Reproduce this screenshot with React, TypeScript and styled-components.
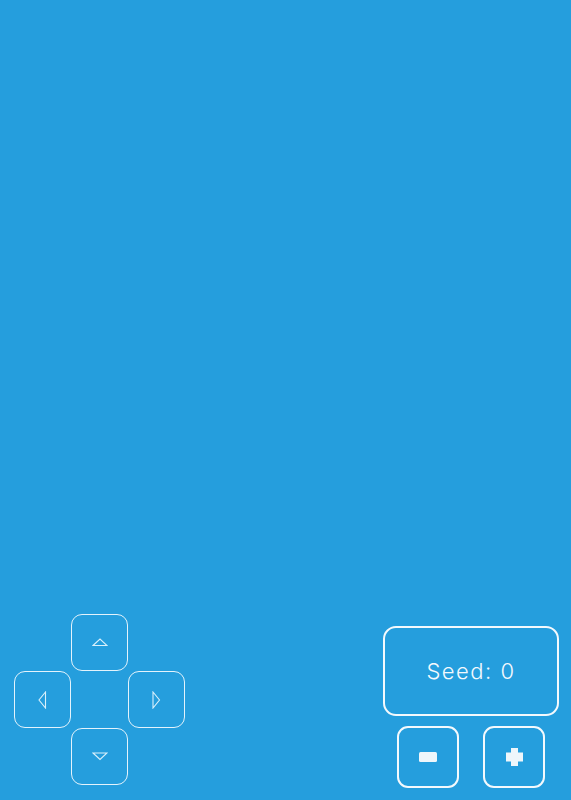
import styled, { createGlobalStyle } from "styled-components";

const GlobalStyle = createGlobalStyle`
	html, body {
		margin: 0;
		padding: 0;
		background-color: #259edd;
	}
`;

type Direction = "up" | "down" | "left" | "right";

const arrowPoints: Record<Direction, string> = {
	up: "1,7.5 8,1 15,7.5",
	down: "1,1 8,7.5 15,1",
	left: "7.5,1 1,9 7.5,17",
	right: "1,1 7.5,9 1,17",
};

function Arrow({ dir }: { dir: Direction }) {
	const vertical = dir === "up" || dir === "down";
	return (
		<svg
			width={vertical ? 16 : 9}
			height={vertical ? 9 : 18}
			viewBox={vertical ? "0 0 16 9" : "0 0 9 18"}
			fill="none"
			stroke="#d9f0fb"
			strokeWidth="1.1"
		>
			<polygon points={arrowPoints[dir]} />
		</svg>
	);
}

export default function App() {
	return (
		<>
			<GlobalStyle />
			<Screen>
				<Controls>
					<DPad>
						<PadButton $col={2} $row={1} aria-label="up">
							<Arrow dir="up" />
						</PadButton>
						<PadButton $col={1} $row={2} aria-label="left">
							<Arrow dir="left" />
						</PadButton>
						<PadButton $col={3} $row={2} aria-label="right">
							<Arrow dir="right" />
						</PadButton>
						<PadButton $col={2} $row={3} aria-label="down">
							<Arrow dir="down" />
						</PadButton>
					</DPad>

					<SeedPanel>
						<SeedDisplay>Seed: 0</SeedDisplay>
						<SeedButtons>
							<SeedButton aria-label="decrease">
								<svg width="18" height="10" viewBox="0 0 18 10">
									<rect x="0" y="0" width="18" height="10" rx="1.5" fill="#eef6fb" />
								</svg>
							</SeedButton>
							<SeedButton aria-label="increase">
								<svg width="17" height="18" viewBox="0 0 17 18">
									<path
										d="M5.5 0 H11.5 V5 H17 V13 H11.5 V18 H5.5 V13 H0 V5 H5.5 Z"
										fill="#eef6fb"
										stroke="#eef6fb"
										strokeWidth="1"
										strokeLinejoin="round"
									/>
								</svg>
							</SeedButton>
						</SeedButtons>
					</SeedPanel>
				</Controls>
			</Screen>
		</>
	);
}

const Screen = styled.div`
	width: 100%;
	height: 800px;
	display: flex;
	flex-direction: column;
	justify-content: flex-end;
	background-color: #259edd;
`;

const Controls = styled.div`
	display: flex;
	justify-content: space-between;
	align-items: flex-end;
	padding: 0 12px 12px 14px;
`;

const DPad = styled.div`
	display: grid;
	grid-template-columns: repeat(3, 57px);
	grid-template-rows: repeat(3, 57px);
	margin-bottom: 3px;
`;

const PadButton = styled.button<{ $col: number; $row: number }>`
	grid-column: ${(p) => p.$col};
	grid-row: ${(p) => p.$row};
	box-sizing: border-box;
	width: 57px;
	height: 57px;
	padding: 0;
	display: flex;
	align-items: center;
	justify-content: center;
	background: transparent;
	border: 1px solid #e3f3fc;
	border-radius: 11px;
	cursor: pointer;
`;

const SeedPanel = styled.div`
	display: flex;
	flex-direction: column;
	align-items: center;
	gap: 10px;
`;

const SeedDisplay = styled.div`
	box-sizing: border-box;
	width: 176px;
	height: 90px;
	display: flex;
	align-items: center;
	justify-content: center;
	border: 2px solid #f3f9fd;
	border-radius: 13px;
	color: #f3f9fd;
	font-family: Inter, "Open Sans", sans-serif;
	font-weight: 300;
	font-size: 22px;
	letter-spacing: 1.5px;
`;

const SeedButtons = styled.div`
	display: flex;
	gap: 24px;
`;

const SeedButton = styled.button`
	box-sizing: border-box;
	width: 62px;
	height: 62px;
	padding: 0;
	display: flex;
	align-items: center;
	justify-content: center;
	background: transparent;
	border: 2px solid #f3f9fd;
	border-radius: 11px;
	cursor: pointer;
`;
